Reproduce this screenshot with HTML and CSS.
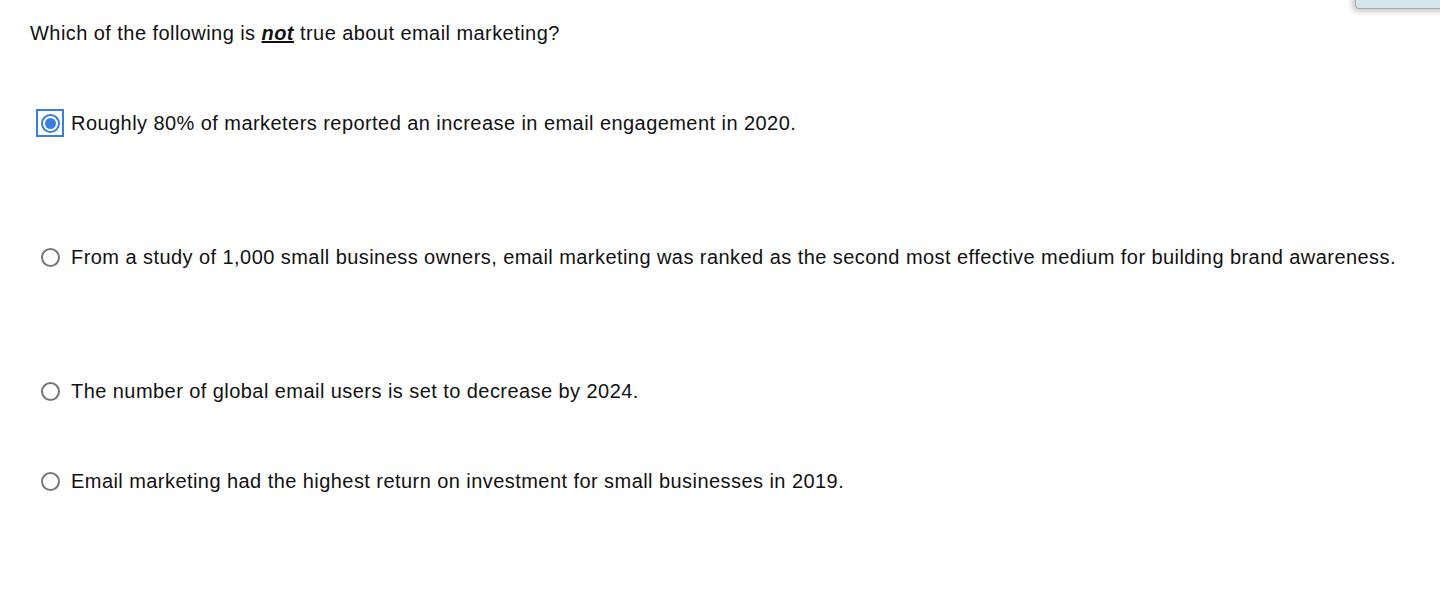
FILE: index.html
```html
<!DOCTYPE html>
<html>
<head>
<meta charset="utf-8">
<link rel="stylesheet" href="styles.css">
</head>
<body>
<div class="corner-box"></div>
<div class="quiz">
  <p class="question">Which of the following is <strong><em><u>not</u></em></strong> true about email marketing?</p>
  <div class="options">
    <label class="option opt-1">
      <span class="radio-wrap focused"><span class="radio checked"><span class="dot"></span></span></span>
      <span class="text">Roughly 80% of marketers reported an increase in email engagement in 2020.</span>
    </label>
    <label class="option opt-2">
      <span class="radio-wrap"><span class="radio"></span></span>
      <span class="text">From a study of 1,000 small business owners, email marketing was ranked as the second most effective medium for building brand awareness.</span>
    </label>
    <label class="option opt-3">
      <span class="radio-wrap"><span class="radio"></span></span>
      <span class="text">The number of global email users is set to decrease by 2024.</span>
    </label>
    <label class="option opt-4">
      <span class="radio-wrap"><span class="radio"></span></span>
      <span class="text">Email marketing had the highest return on investment for small businesses in 2019.</span>
    </label>
  </div>
</div>
</body>
</html>
```

FILE: styles.css
```css
html, body {
  margin: 0;
  padding: 0;
  background: #ffffff;
}
body {
  font-family: "Liberation Sans", Arial, Helvetica, sans-serif;
  font-size: 20px;
  letter-spacing: 0.44px;
  color: #111111;
  width: 1440px;
  height: 610px;
  overflow: hidden;
  position: relative;
}
.corner-box {
  position: absolute;
  left: 1355px;
  top: -10px;
  width: 120px;
  height: 17px;
  background: #d6e6ec;
  border: 1px solid #a9a9a9;
  border-radius: 4px;
  box-shadow: -2px 2px 6px rgba(0,0,0,0.25);
}
.quiz {
  padding: 20px 0 0 30px;
}
.question {
  margin: 0;
  line-height: 26px;
}
.question strong {
  font-weight: 700;
}
.options {
  display: flex;
  flex-direction: column;
  padding-left: 6px;
}
.option {
  display: flex;
  align-items: center;
  gap: 7px;
  height: 28px;
}
.opt-1 { margin-top: 63px; }
.opt-2 { margin-top: 106px; }
.opt-3 { margin-top: 106px; }
.opt-4 { margin-top: 62px; }
.radio-wrap {
  width: 24px;
  height: 24px;
  display: flex;
  align-items: center;
  justify-content: center;
  border: 2px solid transparent;
}
.radio-wrap.focused {
  border-color: #3a7fe0;
}
.radio {
  width: 15px;
  height: 15px;
  border: 2px solid #767676;
  border-radius: 50%;
  display: flex;
  align-items: center;
  justify-content: center;
  box-sizing: content-box;
}
.radio.checked {
  border-color: #3a7fe0;
}
.dot {
  width: 11px;
  height: 11px;
  border-radius: 50%;
  background: #3a7fe0;
}
.text {
  line-height: 26px;
  white-space: nowrap;
}
```
